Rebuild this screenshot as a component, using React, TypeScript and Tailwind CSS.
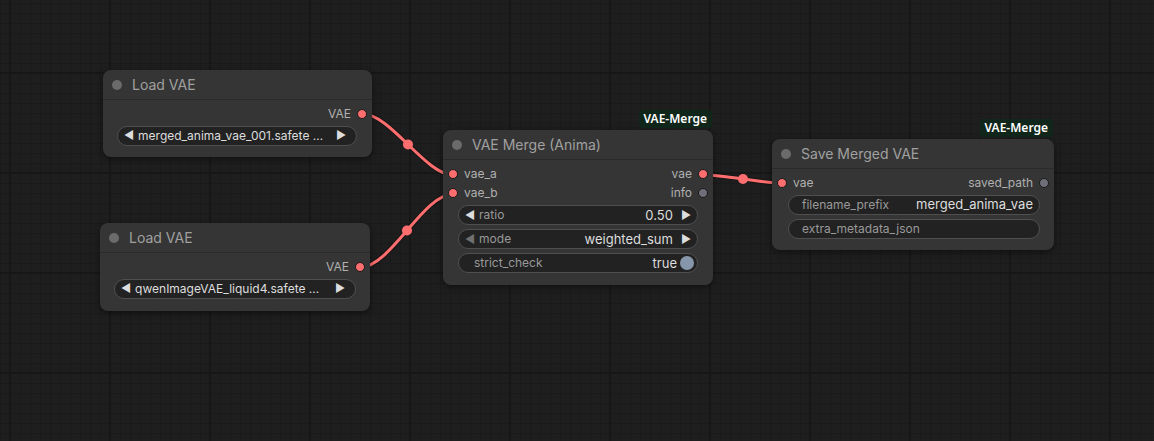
import React from "react";

type Slot = { name: string; color: string };

type Widget =
  | { kind: "combo"; value: string }
  | { kind: "number"; label: string; value: string; dimLeft?: boolean }
  | { kind: "toggle"; label: string; value: string }
  | { kind: "text"; label: string; value: string };

type NodeProps = {
  left: number;
  top: number;
  width: number;
  title: string;
  badge?: string;
  inputs?: Slot[];
  outputs?: Slot[];
  widgets: Widget[];
  widgetPad: string;
};

const RED = "#ff6e6e";
const GREY = "#6f6f7a";

const Dot = ({ color }: { color: string }) => (
  <span
    className="inline-block h-[10px] w-[10px] shrink-0 rounded-full border border-[#1a1a1a]"
    style={{ backgroundColor: color }}
  />
);

const WidgetRow = ({ w }: { w: Widget }) => {
  const base =
    "flex h-5 items-center whitespace-nowrap rounded-full border border-[#4f4f4f] bg-[#222222] text-[12px] leading-none";
  if (w.kind === "combo") {
    return (
      <div className={`${base} pl-[6px] pr-[10px] text-[#dddddd]`}>
        <span className="text-[11px]">◀</span>
        <span className="ml-[4px] flex-1">{w.value}</span>
        <span className="text-[11px]">▶</span>
      </div>
    );
  }
  if (w.kind === "number") {
    return (
      <div className={`${base} pl-[6px] pr-[6px]`}>
        <span className={`text-[11px] ${w.dimLeft ? "text-[#707070]" : "text-[#dddddd]"}`}>◀</span>
        <span className="ml-[4px] flex-1 text-[#999999]">{w.label}</span>
        <span className="mr-[8px] text-[13px] text-[#dddddd]">{w.value}</span>
        <span className="text-[11px] text-[#dddddd]">▶</span>
      </div>
    );
  }
  if (w.kind === "toggle") {
    return (
      <div className={`${base} pl-[15px] pr-[3px]`}>
        <span className="flex-1 text-[#999999]">{w.label}</span>
        <span className="mr-[3px] text-[13px] text-[#dddddd]">{w.value}</span>
        <span className="h-[14px] w-[14px] rounded-full bg-[#8797ab]" />
      </div>
    );
  }
  return (
    <div className={`${base} pl-[13px] pr-[6px]`}>
      <span className="flex-1 text-[#999999]">{w.label}</span>
      <span className="text-[13px] text-[#dddddd]">{w.value}</span>
    </div>
  );
};

const GraphNode = ({ left, top, width, title, badge, inputs = [], outputs = [], widgets, widgetPad }: NodeProps) => {
  const rows = Math.max(inputs.length, outputs.length);
  return (
    <div className="absolute" style={{ left, top, width }}>
      {badge && (
        <div className="absolute -top-[20px] right-[1px] rounded-sm bg-[#10261a] px-[5px] py-[1px] text-[12px] font-semibold leading-[16px] text-white [font-family:'Noto_Sans',sans-serif]">
          {badge}
        </div>
      )}
      <div className="rounded-lg bg-[#353535] shadow-[0_2px_6px_rgba(0,0,0,0.45)]">
        <div className="flex h-[30px] items-center gap-[10px] border-b border-[#2a2a2a] pl-[9px]">
          <span className="h-[10px] w-[10px] rounded-full bg-[#6b6b6b]" />
          <span className="text-[14px] text-[#a0a0a0]">{title}</span>
        </div>
        <div className="flex flex-col pt-[4px]">
          {Array.from({ length: rows }).map((_, i) => (
            <div key={i} className="flex h-[19.5px] items-center justify-between px-[5px] text-[12px] text-[#b0b0b0]">
              <div className="flex items-center gap-[6px]">
                {inputs[i] && (
                  <>
                    <Dot color={inputs[i].color} />
                    <span>{inputs[i].name}</span>
                  </>
                )}
              </div>
              <div className="flex items-center gap-[6px]">
                {outputs[i] && (
                  <>
                    <span>{outputs[i].name}</span>
                    <Dot color={outputs[i].color} />
                  </>
                )}
              </div>
            </div>
          ))}
        </div>
        <div className={`flex flex-col gap-[4px] pt-[2px] ${widgetPad}`}>
          {widgets.map((w, i) => (
            <WidgetRow key={i} w={w} />
          ))}
        </div>
      </div>
    </div>
  );
};

// litegraph-style spline: control points pushed out horizontally by a quarter of the distance
const linkPath = (x1: number, y1: number, x2: number, y2: number) => {
  const d = Math.hypot(x2 - x1, y2 - y1) * 0.25;
  return `M${x1} ${y1} C${x1 + d} ${y1} ${x2 - d} ${y2} ${x2} ${y2}`;
};

const links = [
  [363, 114, 453, 175],
  [361, 267, 453, 194],
  [704, 175, 782, 183],
];

export default function App() {
  return (
    <div className="relative h-[441px] w-full overflow-hidden bg-[#1e1e1e] bg-[linear-gradient(to_right,#171717_2px,transparent_2px),linear-gradient(to_bottom,#171717_2px,transparent_2px),linear-gradient(to_right,#1a1a1a_1px,transparent_1px),linear-gradient(to_bottom,#1a1a1a_1px,transparent_1px)] bg-size-[100px_100px,100px_100px,10px_10px,10px_10px] bg-position-[9px_72px,9px_72px,0_3px,0_3px] [font-family:Inter,'Noto_Sans',sans-serif]">
      <svg className="absolute inset-0" width="1154" height="441">
        {links.map(([x1, y1, x2, y2], i) => (
          <g key={i}>
            <path d={linkPath(x1, y1, x2, y2)} stroke="#151515" strokeWidth={5} fill="none" />
            <path d={linkPath(x1, y1, x2, y2)} stroke={RED} strokeWidth={3} fill="none" />
            <circle cx={(x1 + x2) / 2} cy={(y1 + y2) / 2} r={5} fill={RED} />
          </g>
        ))}
      </svg>

      <GraphNode
        left={103}
        top={70}
        width={269}
        title="Load VAE"
        outputs={[{ name: "VAE", color: RED }]}
        widgets={[{ kind: "combo", value: "merged_anima_vae_001.safete  …" }]}
        widgetPad="pl-[14px] pr-[15px] pb-[11px]"
      />

      <GraphNode
        left={100}
        top={223}
        width={270}
        title="Load VAE"
        outputs={[{ name: "VAE", color: RED }]}
        widgets={[{ kind: "combo", value: "qwenImageVAE_liquid4.safete  …" }]}
        widgetPad="pl-[14px] pr-[14px] pb-[12px]"
      />

      <GraphNode
        left={443}
        top={130}
        width={270}
        title="VAE Merge (Anima)"
        badge="VAE-Merge"
        inputs={[
          { name: "vae_a", color: RED },
          { name: "vae_b", color: RED },
        ]}
        outputs={[
          { name: "vae", color: RED },
          { name: "info", color: GREY },
        ]}
        widgets={[
          { kind: "number", label: "ratio", value: "0.50" },
          { kind: "number", label: "mode", value: "weighted_sum", dimLeft: true },
          { kind: "toggle", label: "strict_check", value: "true" },
        ]}
        widgetPad="px-[15px] pb-[12px]"
      />

      <GraphNode
        left={772}
        top={139}
        width={282}
        title="Save Merged VAE"
        badge="VAE-Merge"
        inputs={[{ name: "vae", color: RED }]}
        outputs={[{ name: "saved_path", color: GREY }]}
        widgets={[
          { kind: "text", label: "filename_prefix", value: "merged_anima_vae" },
          { kind: "text", label: "extra_metadata_json", value: "" },
        ]}
        widgetPad="pl-[16px] pr-[14px] pb-[11px]"
      />
    </div>
  );
}
